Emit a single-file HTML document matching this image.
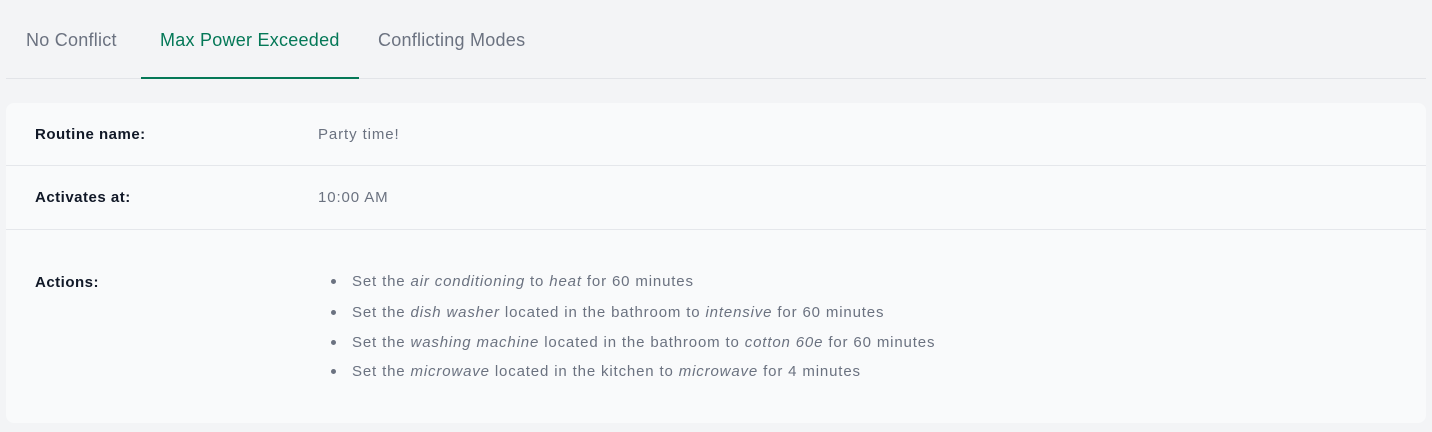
<!DOCTYPE html><html><head><style>
body{margin:0;width:1432px;height:432px;background:#f3f4f6;font-family:"Liberation Sans",sans-serif;overflow:hidden;position:relative}
.tab{position:absolute;top:30px;font-size:18px;color:#6b7280;white-space:nowrap;letter-spacing:0.25px}
.line{position:absolute;left:6px;width:1420px;top:78px;height:1px;background:#e2e4e8}
.ul{position:absolute;left:141px;width:218px;top:77px;height:2px;background:#047857}
.card{position:absolute;left:6px;top:103px;width:1420px;height:320px;background:#f9fafb;border-radius:8px}
.div{position:absolute;left:0;width:1420px;height:1px;background:#e5e7eb}
.lab{position:absolute;left:29px;font-size:15px;font-weight:bold;color:#111827;letter-spacing:0.5px}
.val{position:absolute;left:312px;font-size:15px;color:#6b7280;letter-spacing:0.9px}
.li{position:absolute;left:346px;font-size:15px;color:#6b7280;white-space:nowrap;letter-spacing:0.85px}
.li:before{content:"";position:absolute;left:-21px;top:6px;width:5px;height:5px;border-radius:50%;background:#6b7280}
</style></head><body>
<div class="tab" style="left:26px">No Conflict</div>
<div class="tab" style="left:160px;color:#047857">Max Power Exceeded</div>
<div class="tab" style="left:378px">Conflicting Modes</div>
<div class="line"></div><div class="ul"></div>
<div class="card">
<div class="lab" style="top:23px">Routine name:</div><div class="val" style="top:23px">Party time!</div>
<div class="div" style="top:62px"></div>
<div class="lab" style="top:86px">Activates at:</div><div class="val" style="top:86px">10:00 AM</div>
<div class="div" style="top:126px"></div>
<div class="lab" style="top:171px">Actions:</div>
<div class="li" style="top:170px">Set the <i>air conditioning</i> to <i>heat</i> for 60 minutes</div>
<div class="li" style="top:201px">Set the <i>dish washer</i> located in the bathroom to <i>intensive</i> for 60 minutes</div>
<div class="li" style="top:231px">Set the <i>washing machine</i> located in the bathroom to <i>cotton 60e</i> for 60 minutes</div>
<div class="li" style="top:260px">Set the <i>microwave</i> located in the kitchen to <i>microwave</i> for 4 minutes</div>
</div>
</body></html>
